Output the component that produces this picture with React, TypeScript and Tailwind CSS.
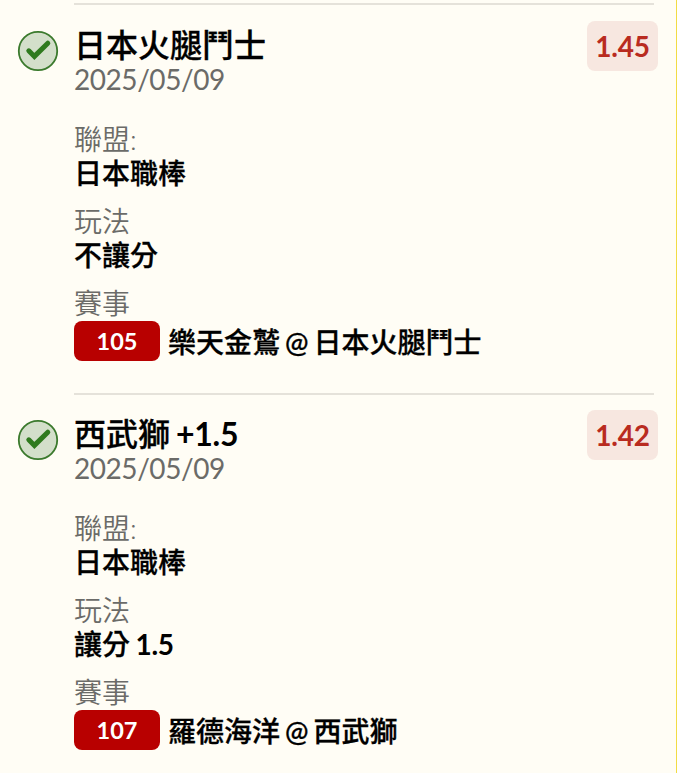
import clsx from 'clsx'

export interface Pick {
    title: string
    date: string
    odds: string
    league: string
    play: string
    code: string
    match: string
}

const picks: Pick[] = [
    {
        title: '日本火腿鬥士',
        date: '2025/05/09',
        odds: '1.45',
        league: '日本職棒',
        play: '不讓分',
        code: '105',
        match: '樂天金鷲 @ 日本火腿鬥士',
    },
    {
        title: '西武獅 +1.5',
        date: '2025/05/09',
        odds: '1.42',
        league: '日本職棒',
        play: '讓分 1.5',
        code: '107',
        match: '羅德海洋 @ 西武獅',
    },
]

function CheckBadge() {
    return (
        <svg className="w-[42px] h-[42px]" viewBox="0 0 42 42" fill="none">
            <circle cx="21" cy="21" r="19.2" fill="#d3dfca" stroke="#3b7a2d" strokeWidth="1.8" />
            <path
                d="M11.8 20.8l5.6 5.6L30.8 13.2"
                stroke="#2f7a1e"
                strokeWidth="5"
                strokeLinecap="round"
            />
        </svg>
    )
}

// Han characters stay medium, numbers and signs are bold
function Strong({ text }: { text: string }) {
    return (
        <span className="font-medium [-webkit-text-stroke:0.3px]">
            {text.split(/([+\d.]+)/).map((part, i) =>
                i % 2 ? (
                    <span
                        key={i}
                        className="font-bold tracking-[-0.3px] [-webkit-text-stroke:0]"
                    >
                        {part}
                    </span>
                ) : (
                    part
                )
            )}
        </span>
    )
}

function Label({ children }: { children: string }) {
    return (
        <div className="h-[34px] leading-[32px] text-[28px] font-[350] text-[#6b6b68]">
            {children}
        </div>
    )
}

function Field({ label, value }: { label: string; value: string }) {
    return (
        <div className="h-[82px]">
            <Label>{label}</Label>
            <div className="h-[34px] leading-[32px] text-[28px] [word-spacing:-1.5px]">
                <Strong text={value} />
            </div>
        </div>
    )
}

function PickItem({ pick, first }: { pick: Pick; first: boolean }) {
    return (
        <section className={clsx('flex pl-[17px] pr-[18px]', first ? 'h-[390px]' : 'h-[388px]')}>
            <div className={clsx('w-[57px] shrink-0', first ? 'pt-[27px]' : 'pt-[26px]')}>
                <CheckBadge />
            </div>
            <div className="flex-1">
                <div className="h-[2px] mr-1 bg-[#e5e2da]" />
                <div className={clsx('flex justify-between', first ? 'pt-4' : 'pt-[15px]')}>
                    <div className="pt-[6px]">
                        <h2 className="h-9 leading-9 text-[32px] [word-spacing:-2px]">
                            <Strong text={pick.title} />
                        </h2>
                        <p className="h-8 leading-8 text-[28px] tracking-[-0.45px] text-[#6b6b68]">
                            {pick.date}
                        </p>
                    </div>
                    <div className="w-[71px] h-[50px] rounded-lg bg-[#f7e7e0] text-center leading-[50px] text-[28px] font-bold tracking-[-0.2px] text-[#b92b20]">
                        {pick.odds}
                    </div>
                </div>
                <div className="pt-[28px]">
                    <Field label="聯盟:" value={pick.league} />
                    <Field label="玩法" value={pick.play} />
                    <Label>賽事</Label>
                    <div className="flex items-start gap-2 text-[28px]">
                        <span className="w-[86px] h-10 rounded-lg bg-[#b80000] text-center leading-10 text-[23.5px] font-bold text-white">
                            {pick.code}
                        </span>
                        <span className="leading-[42px] whitespace-nowrap [word-spacing:-2px]">
                            <Strong text={pick.match} />
                        </span>
                    </div>
                </div>
            </div>
        </section>
    )
}

export default function App() {
    return (
        <main
            lang="zh-Hant"
            className="w-[677px] h-[773px] overflow-hidden pt-[3px] border-r border-[#f2dc45] bg-[#fffdf5] text-black font-['Lato','Noto_Sans_CJK_TC',sans-serif]"
        >
            {picks.map((pick, i) => (
                <PickItem key={pick.code} pick={pick} first={i === 0} />
            ))}
        </main>
    )
}
